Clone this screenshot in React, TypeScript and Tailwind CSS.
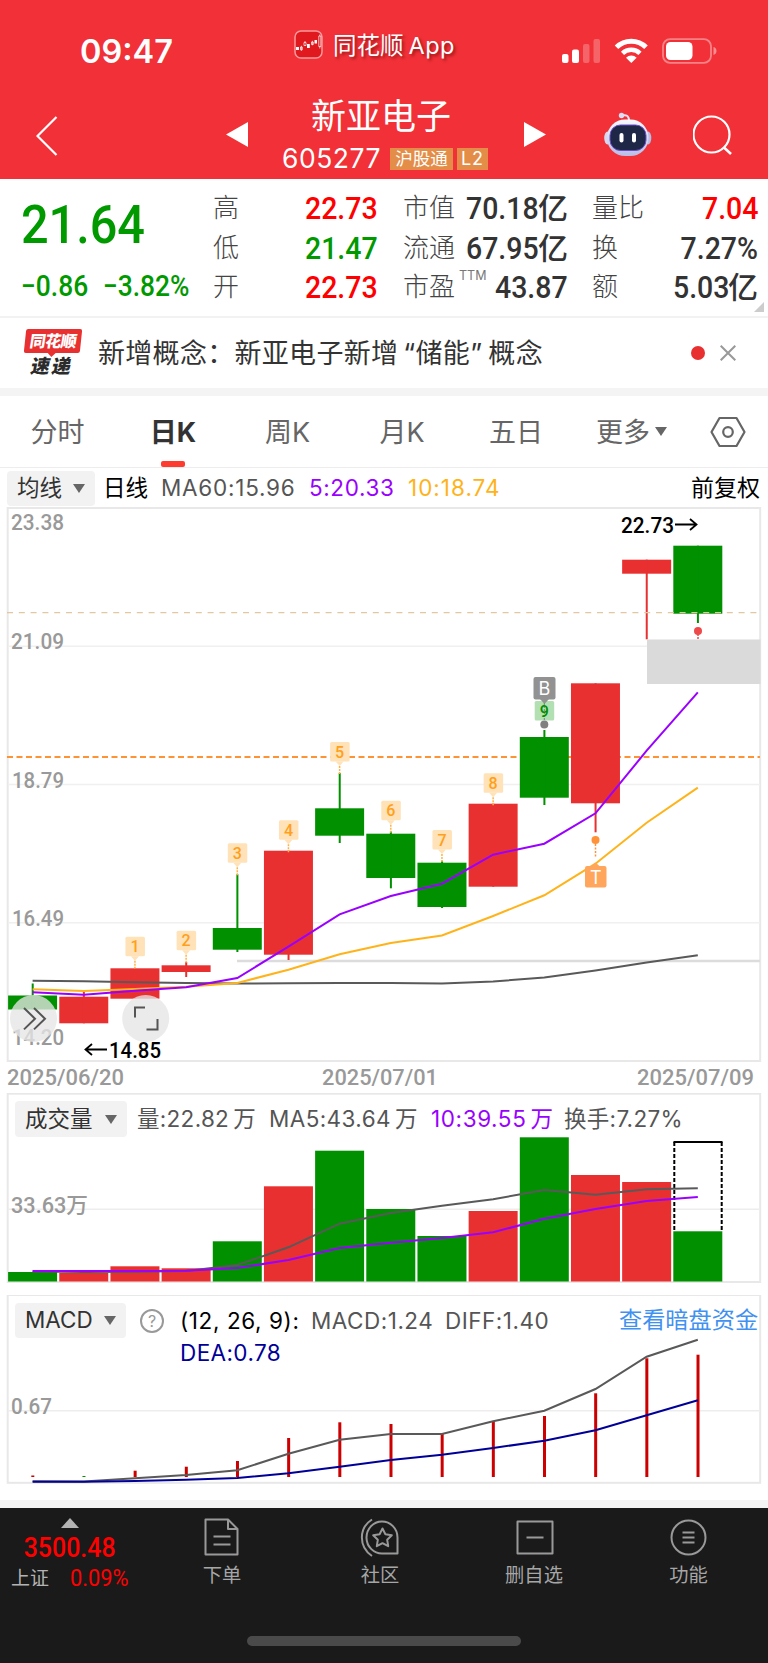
import clsx from 'clsx';
import type { ReactNode } from 'react';

const RED = '#e93030';
const GREEN = '#009000';
const PURPLE = '#9900ff';
const DIN = 'Roboto, "Noto Sans CJK SC", sans-serif';

// x centre of the n-th trading day, shared by all three charts
const cx = (i: number) => 32.6 + i * 51.17;

interface Candle {
    up: boolean;
    top: number;
    bottom: number;
    high: number;
    low: number;
}

const candles: Candle[] = [
    { up: false, top: 995.5, bottom: 1009.5, high: 983.5, low: 1009.5 },
    { up: true, top: 996.7, bottom: 1023.3, high: 992, low: 1023.3 },
    { up: true, top: 968.3, bottom: 998.7, high: 968.3, low: 998.7 },
    { up: true, top: 965.3, bottom: 972, high: 962, low: 977 },
    { up: false, top: 928, bottom: 949.7, high: 874.3, low: 952 },
    { up: true, top: 850.7, bottom: 954.7, high: 850.7, low: 960 },
    { up: false, top: 808.3, bottom: 835.7, high: 773, low: 843 },
    { up: false, top: 833.7, bottom: 878, high: 831.5, low: 888.3 },
    { up: false, top: 862.7, bottom: 907, high: 860.7, low: 908 },
    { up: true, top: 803.7, bottom: 886.7, high: 803.7, low: 886.7 },
    { up: false, top: 737, bottom: 797.7, high: 730, low: 805 },
    { up: true, top: 683.3, bottom: 803.3, high: 683.3, low: 832.3 },
    { up: true, top: 559.7, bottom: 573.7, high: 559.7, low: 639.3 },
    { up: false, top: 545.7, bottom: 613.7, high: 545.7, low: 623 },
];

const ma60 = [980.7, 981.3, 982.3, 983, 983.5, 983.3, 983, 983, 983.5, 981.5, 977.5, 970.5, 962.5, 955.3];
const ma5 = [992.3, 994.7, 990.7, 987.3, 978, 946.7, 914.3, 896, 883.7, 854.7, 843.7, 813.3, 750.7, 692.3];
const ma10 = [989.3, 991, 989, 986.7, 983, 969.7, 954.3, 943, 935.5, 916, 895.3, 863.7, 822.7, 787.7];

const volumes = [1272, 1273, 1266.3, 1268.3, 1241.3, 1186.3, 1150.7, 1209, 1236, 1211, 1137.3, 1175, 1182, 1231.3];
const volMa5 = [1271.5, 1272, 1271.7, 1271, 1265, 1247.3, 1223.7, 1213, 1205.7, 1199.3, 1190, 1194.7, 1189.3, 1188.3];
const volMa10 = [1271, 1271, 1271, 1270.7, 1268, 1260, 1248, 1242.7, 1238, 1232.3, 1218.7, 1209, 1201, 1197];

const macd = [1475.5, 1476, 1470.7, 1466.7, 1461, 1438, 1422.3, 1424, 1434, 1422, 1416, 1393.3, 1358.3, 1354.7];
const diff = [1481.3, 1481.5, 1478.3, 1475, 1470.3, 1453.7, 1439.7, 1434, 1434, 1421.3, 1410.7, 1389, 1356.7, 1339.7];
const dea = [1481.8, 1481.8, 1481, 1479.7, 1478, 1473.3, 1466.7, 1460, 1454.7, 1448, 1440.7, 1430.3, 1415.3, 1400.3];

// [day index, label, y of the tag's top edge]
const tags: [number, string, number][] = [
    [2, '1', 936.7],
    [3, '2', 930.7],
    [4, '3', 843.3],
    [5, '4', 820.3],
    [6, '5', 742],
    [7, '6', 800.7],
    [8, '7', 830],
    [9, '8', 773.3],
];

function Line({ ys, color, width = 2 }: { ys: number[]; color: string; width?: number }) {
    return (
        <polyline
            points={ys.map((y, i) => `${cx(i)},${y}`).join(' ')}
            fill="none"
            stroke={color}
            strokeWidth={width}
        />
    );
}

function AxisLabel({ x, y, w, children, color = '#999999' }: { x: number; y: number; w: number; children: ReactNode; color?: string }) {
    return (
        <text
            x={x}
            y={y}
            textLength={w}
            lengthAdjust="spacingAndGlyphs"
            fontFamily={DIN}
            fontSize="22"
            fontWeight="500"
            fill={color}
        >
            {children}
        </text>
    );
}

function Caret({ className }: { className?: string }) {
    return (
        <svg viewBox="0 0 12 9" className={clsx('h-[9px] w-3 shrink-0', className)}>
            <path d="M0 0h12L6 9z" fill="#666666" />
        </svg>
    );
}

function StatusBar() {
    return (
        <div className="flex h-[92px] text-white">
            <div className="mt-[35px] ml-[80px] w-[214px] text-[32.500px] leading-[34px] font-semibold">09:47</div>
            <svg viewBox="0 0 29 29" className="mt-[30px] h-[29px] w-[29px] shrink-0">
                <rect x="1" y="1" width="27" height="27" rx="6" fill="#e0191f" stroke="#f99a9c" strokeWidth="1.5" />
                <g fill="#fff">
                    <path d="M2 17h3v3H2zM13 14h2.800v4H13zM20.500 10h2.500v3.500h-2.500z" />
                </g>
                <g fill="none" stroke="#fff" strokeWidth="0.7">
                    <path d="M6.500 17h1.800v2.800H6.500zM10 12.500h2v3h-2zM17.500 12h1.800v2.500h-1.800zM24.800 6h2v10.500h-2zM7.400 15.800v5M11 11v1.500M18.400 10.800v4.500M25.800 4.500v1.500M25.800 16.500v2" />
                </g>
            </svg>
            <div className="mt-[31px] ml-[10px] w-[129px] text-[23.500px] leading-[29px] whitespace-nowrap [text-shadow:2px_2px_3px_rgba(80,0,0,.55)]">
                同花顺<span className="ml-[5px] tracking-[0.5px]">App</span>
            </div>
            <svg viewBox="0 0 156 27" className="mt-[38px] ml-[100px] h-[27px] w-[156px]">
                <g fill="#fff">
                    <rect x="0" y="16" width="6.500" height="9" rx="2" />
                    <rect x="10" y="11.500" width="7" height="13.500" rx="2" />
                    <rect x="21" y="6" width="6.500" height="19" rx="2" opacity=".25" />
                    <rect x="31.500" y="1" width="6.500" height="24" rx="2" opacity=".25" />
                </g>
                <g fill="none" stroke="#fff" strokeWidth="5">
                    <path d="M54.500 9.300a21 21 0 0 1 29.500 0" />
                    <path d="M60.500 15.300a12.500 12.500 0 0 1 17.500 0" strokeWidth="4.500" />
                </g>
                <path d="M69.300 25l-5.300-5.300a7.500 7.500 0 0 1 10.600 0z" fill="#fff" />
                <rect x="101" y="1.200" width="48" height="23.600" rx="7" fill="none" stroke="#fff" strokeOpacity=".4" strokeWidth="1.800" />
                <rect x="104" y="4" width="26.500" height="18" rx="4.500" fill="#fff" />
                <path d="M151.500 9c2 .6 3 2.200 3 4s-1 3.400-3 4z" fill="#fff" opacity=".45" />
            </svg>
        </div>
    );
}

function TitleBar() {
    return (
        <div className="flex h-[87px] text-white">
            <svg viewBox="0 0 22 40" className="mt-[24px] ml-[36px] h-10 w-[22px] shrink-0">
                <path d="M20.500 1L1.500 20l19 19" fill="none" stroke="#fff" strokeWidth="2.200" />
            </svg>
            <svg viewBox="0 0 22 25" className="mt-[30px] ml-[168px] h-[25px] w-[22px] shrink-0">
                <path d="M22 0v25L0 12.500z" fill="#fff" />
            </svg>
            <div className="ml-[22px] flex w-[230px] flex-col">
                <div className="mt-[5px] ml-[41px] text-[35px] leading-[38px] whitespace-nowrap">新亚电子</div>
                <div className="mt-[11px] flex h-[24px] w-full items-center pl-[12px]">
                    <span className="w-[108px] text-[26.500px] leading-6 tracking-[0.5px]">605277</span>
                    <span className="mt-[1px] h-[22px] w-[63px] bg-[#e48d48] text-center text-[17.500px] leading-[21px] whitespace-nowrap">
                        沪股通
                    </span>
                    <span className="mt-[1px] ml-1 h-[22px] w-[31px] bg-[#e48d48] text-center text-[18px] leading-[22px] tracking-[1px]">
                        L2
                    </span>
                </div>
            </div>
            <svg viewBox="0 0 22 25" className="mt-[30px] ml-[24px] h-[25px] w-[22px] shrink-0">
                <path d="M0 0v25l22-12.500z" fill="#fff" />
            </svg>
            <svg viewBox="0 0 48 45" className="mt-[20px] ml-[58px] h-[45px] w-12 shrink-0">
                <defs>
                    <linearGradient id="shell" x1="0" y1="0" x2="0" y2="1">
                        <stop offset="0" stopColor="#f8f8ff" />
                        <stop offset="1" stopColor="#b9bce6" />
                    </linearGradient>
                </defs>
                <path d="M18 3.500c4-1 7 0 7 5" fill="none" stroke="#e9e6f8" strokeWidth="2" />
                <circle cx="17.500" cy="3.500" r="2.700" fill="#dcdcf5" />
                <ellipse cx="3.500" cy="26" rx="3.300" ry="6.500" fill="#d5d8f0" />
                <ellipse cx="44" cy="26" rx="3.300" ry="6.500" fill="#b9bde6" />
                <rect x="3" y="7.500" width="41.500" height="36.500" rx="18" fill="url(#shell)" />
                <rect x="6" y="13" width="36" height="25.500" rx="10.500" fill="#1f2747" stroke="#6b4bc9" strokeWidth="1" />
                <rect x="15.500" y="21" width="4" height="9.500" rx="2" fill="#fff" />
                <rect x="28" y="21" width="4" height="9.500" rx="2" fill="#fff" />
            </svg>
            <svg viewBox="0 0 40 40" className="mt-[23px] ml-[41px] h-10 w-10 shrink-0">
                <circle cx="18.500" cy="19.500" r="18" fill="none" stroke="#fff" strokeWidth="2.200" />
                <path d="M31 32.500l7 6.500" stroke="#fff" strokeWidth="2.500" />
            </svg>
        </div>
    );
}

interface StatProps {
    label: string;
    value: string;
    unit?: string;
    sup?: string;
    className?: string;
}

function Stat({ label, value, unit, sup, className = 'text-[#333]' }: StatProps) {
    return (
        <div className="flex h-[39.7px] items-center whitespace-nowrap">
            <span className="text-[26px] leading-none font-light text-[#444]">{label}</span>
            {sup && <span className="mb-[22px] ml-1 text-[12.5px] leading-none text-[#777]">{sup}</span>}
            <span className={clsx('ml-auto flex h-full items-center', className)}>
                <span className="inline-block origin-right scale-x-[.89] font-[Roboto] text-[32px] leading-none font-medium">
                    {value}
                </span>
                {unit && <span className="-ml-px text-[30px] leading-none font-medium">{unit}</span>}
            </span>
        </div>
    );
}

function Quote() {
    return (
        <div className="relative flex h-[139px] border-b-2 border-[#f2f2f2] pt-[9px]">
            <div className="ml-[21px] w-[192px] font-[Roboto] text-[#009900]">
                <div className="mt-[7px] h-[60px] origin-left scale-x-[.9] text-[54px] leading-[60px] font-medium">21.64</div>
                <div className="mt-[15px] flex origin-left scale-x-[.91] text-[29px] leading-[32px] font-medium whitespace-nowrap">
                    <span className="w-[90px]">−0.86</span>
                    <span>−3.82%</span>
                </div>
            </div>
            <div className="w-[165px]">
                <Stat label="高" value="22.73" className="text-[#ff0000]" />
                <Stat label="低" value="21.47" className="text-[#009900]" />
                <Stat label="开" value="22.73" className="text-[#ff0000]" />
            </div>
            <div className="ml-[25px] w-[165px]">
                <Stat label="市值" value="70.18" unit="亿" />
                <Stat label="流通" value="67.95" unit="亿" />
                <Stat label="市盈" sup="TTM" value="43.87" />
            </div>
            <div className="ml-[24px] w-[166px]">
                <Stat label="量比" value="7.04" className="text-[#ff0000]" />
                <Stat label="换" value="7.27%" />
                <Stat label="额" value="5.03" unit="亿" />
            </div>
            <svg viewBox="0 0 10 10" className="absolute right-1 bottom-[4px] h-[10px] w-[10px]">
                <path d="M10 0v10H0z" fill="#cccccc" />
            </svg>
        </div>
    );
}

function NewsFlash() {
    return (
        <div className="flex h-[70px] items-center">
            <div className="ml-[25px] flex w-[73px] flex-col">
                <div className="relative flex h-[24px] w-[56px] -skew-x-6 items-center justify-center rounded-[2px] bg-[#e93030] text-[16px] leading-none font-black tracking-[-0.5px] text-white">
                    <span className="-skew-x-3">同花顺</span>
                    <svg viewBox="0 0 8 4" className="absolute top-6 left-[24px] h-1 w-2">
                        <path d="M0 0h8L4 4z" fill="#e93030" />
                    </svg>
                </div>
                <div className="ml-[6px] mt-[4px] h-5 -skew-x-12 text-[19px] leading-5 font-black tracking-[2px] text-[#2b2b2b]">速递</div>
            </div>
            <div className="w-[593px] text-[27px] leading-none tracking-[0.3px] whitespace-nowrap text-[#333]">
                新增概念：<span>新亚电子新增</span>
                <span className="ml-[5px] font-[Inter]">“</span>储能<span className="mr-[6px] font-[Inter]">”</span>概念
            </div>
            <div className="h-[14px] w-[14px] rounded-full bg-[#e93030]" />
            <svg viewBox="0 0 16 16" className="ml-[15px] h-4 w-4">
                <path d="M.7.7l14.600 14.600M15.300.7L.7 15.300" stroke="#999999" strokeWidth="2" />
            </svg>
        </div>
    );
}

const tabs = [
    { label: '分时', width: 'w-[115px]' },
    { label: '日K', width: 'w-[116px]', active: true },
    { label: '周K', width: 'w-[113px]' },
    { label: '月K', width: 'w-[116px]' },
    { label: '五日', width: 'w-[112px]' },
];

function PeriodTabs() {
    return (
        <div className="flex h-[72px] border-b border-[#ededed] text-[27px] leading-none text-[#666]">
            {tabs.map((tab) => (
                <div key={tab.label} className={clsx('flex flex-col items-center justify-between', tab.width)}>
                    <span className={clsx('pt-[23px]', tab.active && 'font-bold text-[#333]')}>{tab.label}</span>
                    {tab.active && <span className="h-[6px] w-[24px] rounded-[2px] bg-[#ff3b30]" />}
                </div>
            ))}
            <div className="flex w-[119px] justify-center pt-[23px]">
                更多
                <Caret className="mt-[8px] ml-[5px]" />
            </div>
            <svg viewBox="0 0 36 32" className="mt-[20px] ml-[19px] h-8 w-9">
                <path d="M9.500 2h17L34.500 16l-8 14h-17L1.500 16z" fill="none" stroke="#666666" strokeWidth="2.200" strokeLinejoin="round" />
                <circle cx="18" cy="16" r="4.800" fill="none" stroke="#666666" strokeWidth="2.200" />
            </svg>
        </div>
    );
}

function Picker({ label, className }: { label: string; className: string }) {
    return (
        <div className={clsx('flex shrink-0 items-center justify-between rounded-[4px] bg-[#f2f2f2] px-[10px] text-[#333]', className)}>
            {label}
            <Caret />
        </div>
    );
}

function CandleChart() {
    return (
        <svg viewBox="0 507 768 586" className="block h-[586px] w-[768px]">
            <rect x="7.700" y="508" width="752.500" height="553" fill="none" stroke="#e8e8e8" strokeWidth="2" />
            <path d="M8 646.200h752M8 784.500h752M8 922.800h752" stroke="#f0f0f0" strokeWidth="1.500" />
            <AxisLabel x={11} y={530} w={53}>23.38</AxisLabel>
            <AxisLabel x={11} y={649} w={53}>21.09</AxisLabel>
            <AxisLabel x={12} y={787.5} w={52}>18.79</AxisLabel>
            <AxisLabel x={12} y={926} w={52}>16.49</AxisLabel>
            <AxisLabel x={12} y={1045} w={52}>14.20</AxisLabel>

            <path d="M7 757h753" stroke="#ff9233" strokeWidth="2" strokeDasharray="6 3.500" />
            <path d="M237 961h523" stroke="#dcdcdc" strokeWidth="2.500" />
            {candles.map((c, i) => (
                <g key={i} fill={c.up ? RED : GREEN}>
                    <rect x={cx(i) - 24.5} y={c.top} width="49" height={c.bottom - c.top} />
                    <rect x={cx(i) - 0.9} y={c.high} width="2" height={c.low - c.high} />
                </g>
            ))}
            <path d="M7 612.700h753" stroke="#e3c7a1" strokeWidth="1.300" strokeDasharray="6 5.800" />
            <rect x="647" y="639.500" width="113.500" height="44.500" fill="#dadada" />
            <Line ys={ma60} color="#595959" />
            <Line ys={ma10} color="#ffb31a" />
            <Line ys={ma5} color={PURPLE} />

            {tags.map(([i, label, y]) => (
                <g key={label}>
                    <rect x={cx(i) - 9.5} y={y} width="19.500" height="19.500" rx="1.500" fill="#ffe2b8" />
                    <path d={`M${cx(i) - 4} ${y + 19.5}h8l-4 4.500z`} fill="#ffe2b8" />
                    <path d={`M${cx(i)} ${y + 24}v8`} stroke="#ffb347" strokeWidth="1.500" strokeDasharray="2 1" />
                    <text x={cx(i)} y={y + 15.5} textAnchor="middle" fontFamily={DIN} fontSize="16" fontWeight="500" fill="#ff9f1c">
                        {label}
                    </text>
                </g>
            ))}

            <rect x="534.700" y="701" width="19.500" height="19.500" rx="1.500" fill="#b3e0b3" />
            <path d="M540 699h9l-4.500 5z" fill="#929292" />
            <path d="M544.300 703v22" stroke="#808080" strokeWidth="1" strokeDasharray="2 1" />
            <text x="544.300" y="716.500" textAnchor="middle" fontFamily={DIN} fontSize="16" fontWeight="500" fill={GREEN}>
                9
            </text>
            <rect x="533.500" y="677" width="22" height="22.500" rx="2" fill="#929292" />
            <text x="544.300" y="695" textAnchor="middle" fontFamily="Inter" fontSize="18" fill="#fff">
                B
            </text>
            <circle cx="544.300" cy="724.500" r="4" fill="#808080" />

            <circle cx="595.500" cy="840" r="4" fill="#ff9138" />
            <path d="M595.500 844v14" stroke="#ff9138" strokeWidth="1.500" strokeDasharray="2 1.500" />
            <path d="M591 866.500h9l-4.500-4z" fill="#ffa65c" />
            <rect x="585" y="866" width="21.500" height="21.500" rx="2" fill="#ffa65c" />
            <text x="595.700" y="883.500" textAnchor="middle" fontFamily="Inter" fontSize="18" fill="#fff">
                T
            </text>

            <circle cx="698" cy="631" r="4" fill="#ef4a4a" />
            <path d="M698 634v6" stroke="#ef4a4a" strokeWidth="1.500" strokeDasharray="2 1" />

            <AxisLabel x={621} y={532.5} w={53} color="#000000">22.73</AxisLabel>
            <path d="M675 524.500h21M690 519l6.500 5.500-6.500 5.500" fill="none" stroke="#000" strokeWidth="1.800" />
            <AxisLabel x={109} y={1057.500} w={52} color="#000000">14.85</AxisLabel>
            <path d="M107 1049.500H86M92 1044l-6.500 5.500 6.500 5.500" fill="none" stroke="#000" strokeWidth="1.800" />

            <g fill="#e6e6e6" fillOpacity=".78">
                <circle cx="33.500" cy="1018.500" r="23.500" />
                <circle cx="145.700" cy="1018.500" r="23.500" />
            </g>
            <g fill="none" stroke="#555555" strokeWidth="2">
                <path d="M24 1008l11 10.700-11 10.700M34 1008l11 10.700-11 10.700" />
                <path d="M135 1017.500v-10h10M157.500 1019v10.500h-11" />
            </g>

            <AxisLabel x={7} y={1084.5} w={117}>2025/06/20</AxisLabel>
            <AxisLabel x={322} y={1084.5} w={116}>2025/07/01</AxisLabel>
            <AxisLabel x={637} y={1084.5} w={117}>2025/07/09</AxisLabel>
        </svg>
    );
}

function VolumePanel() {
    return (
        <div className="relative h-[202px]">
            <svg viewBox="0 1093 768 202" className="absolute inset-0 h-full w-full">
                <rect x="7.700" y="1093.700" width="752.500" height="188.300" fill="none" stroke="#e8e8e8" strokeWidth="2" />
                <path d="M8 1209.300h752" stroke="#ededed" strokeWidth="1.500" />
                {volumes.map((y, i) => (
                    <rect key={i} x={cx(i) - 24.5} y={y} width="49" height={1281.5 - y} fill={candles[i].up ? RED : GREEN} />
                ))}
                <path d="M673.500 1142h49" stroke="#000" strokeWidth="2" />
                <path d="M674.300 1142v89M721.700 1142v89" stroke="#000" strokeWidth="2" strokeDasharray="4 2" />
                <Line ys={volMa5} color="#595959" />
                <Line ys={volMa10} color={PURPLE} />
                <AxisLabel x={11} y={1212.5} w={77}>33.63万</AxisLabel>
            </svg>
            <div className="relative flex items-center pt-[8px] text-[22.500px] leading-none whitespace-nowrap text-[#555]">
                <Picker label="成交量" className="ml-[15px] h-9 w-[112px]" />
                <span className="ml-[10px] w-[132px] pt-px tracking-[0.3px]">
                    量:22.82<span className="ml-[4px]">万</span>
                </span>
                <span className="w-[162px] pt-px tracking-[0.4px]">
                    MA5:43.64<span className="ml-[4px]">万</span>
                </span>
                <span className="w-[133px] pt-px tracking-[0.6px] text-[#9900ff]">
                    10:39.55<span className="ml-[4px]">万</span>
                </span>
                <span className="pt-px tracking-[0.3px]">换手:7.27%</span>
            </div>
        </div>
    );
}

function MacdPanel() {
    return (
        <div className="relative h-[205px]">
            <svg viewBox="0 1295 768 205" className="absolute inset-0 h-full w-full">
                <rect x="7.700" y="1295" width="752.500" height="187.800" fill="none" stroke="#e8e8e8" strokeWidth="2" />
                <path d="M8 1410.700h752" stroke="#ededed" strokeWidth="1.500" />
                {macd.map((y, i) => (
                    <rect key={i} x={cx(i) - 1.3} y={y} width="3" height={1477 - y} fill={i === 1 ? GREEN : '#cc0000'} />
                ))}
                <Line ys={diff} color="#595959" />
                <Line ys={dea} color="#000099" />
                <AxisLabel x={11} y={1414} w={41}>0.67</AxisLabel>
            </svg>
            <div className="relative flex items-center pt-[8px] text-[22.500px] leading-none whitespace-nowrap text-[#555]">
                <Picker label="MACD" className="ml-[15px] h-[35px] w-[111px]" />
                <span className="ml-[14px] flex h-6 w-6 items-center justify-center rounded-full border-2 border-[#999] text-[16px] text-[#999]">
                    ?
                </span>
                <span className="ml-[16px] w-[131px] pt-px tracking-[0.6px] text-black">(12, 26, 9):</span>
                <span className="w-[134px] pt-px tracking-[0.5px]">MACD:1.24</span>
                <span className="w-[174px] pt-px tracking-[0.5px]">DIFF:1.40</span>
                <span className="pt-px text-[23.200px] text-[#4191f0]">查看暗盘资金</span>
            </div>
            <div className="relative mt-[4px] ml-[180px] text-[22.500px] leading-none tracking-[0.4px] text-[#000099]">DEA:0.78</div>
        </div>
    );
}

const navItems = [
    {
        label: '下单',
        width: 'w-[166px]',
        icon: (
            <>
                <path d="M3.500 2.500H26l9.500 9.500v25.500h-32zM26 2.500V12h9.500" />
                <path d="M11.500 19.500h17M11.500 27.500h17" />
            </>
        ),
    },
    {
        label: '社区',
        width: 'w-[150px]',
        icon: (
            <>
                <path d="M37.500 36.500H22.500a15.500 16 0 1 1 15-16z" />
                <path d="M12 2.500C-1.500 11-1.500 30 12 39" />
                <path d="M22.500 11.500l2.900 5.800 6.400 1-4.600 4.500 1 6.400-5.700-3-5.700 3 1-6.400-4.600-4.500 6.400-1z" />
            </>
        ),
    },
    {
        label: '删自选',
        width: 'w-[158px]',
        icon: <path d="M3.500 4.500h35v32h-35zM12.500 20.500h17" />,
    },
    {
        label: '功能',
        width: 'w-[151px]',
        icon: (
            <>
                <circle cx="20.500" cy="20.500" r="17" />
                <path d="M14.500 15.500h12M14.500 20.500h12M14.500 25.500h12" />
            </>
        ),
    },
];

function BottomNav() {
    return (
        <div className="flex h-[155px] flex-col items-center bg-[#1a1a1a]">
            <div className="flex h-[128px] w-full">
                <div className="flex w-[139px] flex-col items-center">
                    <svg viewBox="0 0 18 10" className="mt-[10px] h-[10px] w-[18px]">
                        <path d="M9 0l9 10H0z" fill="#b3b3b3" />
                    </svg>
                    <div className="mt-[4px] scale-x-[.89] font-[Roboto] text-[28px] leading-[32px] font-medium text-[#ff0000]">3500.48</div>
                    <div className="mt-[2px] flex h-[24px] w-full items-center whitespace-nowrap">
                        <span className="ml-[11px] text-[19px] leading-none text-[#b3b3b3]">上证</span>
                        <span className="ml-[21px] origin-left scale-x-[.91] font-[Roboto] text-[24px] leading-none text-[#ff0000]">
                            0.09%
                        </span>
                    </div>
                </div>
                {navItems.map((item) => (
                    <div key={item.label} className={clsx('flex flex-col items-center text-[#a6a6a6]', item.width)}>
                        <svg
                            viewBox="0 0 41 41"
                            className="mt-[9px] h-[41px] w-[41px]"
                            fill="none"
                            stroke="#999999"
                            strokeWidth="2"
                            strokeLinejoin="round"
                        >
                            {item.icon}
                        </svg>
                        <span className="mt-[8px] text-[19.300px] leading-none">{item.label}</span>
                    </div>
                ))}
            </div>
            <div className="h-[10px] w-[274px] rounded-full bg-[#4a4a4a]" />
        </div>
    );
}

export default function App() {
    return (
        <div className="flex h-[1663px] w-[768px] flex-col overflow-hidden bg-white font-[Inter,'Noto_Sans_CJK_SC',sans-serif]">
            <header className="h-[179px] shrink-0 bg-[#f23037]">
                <StatusBar />
                <TitleBar />
            </header>
            <Quote />
            <NewsFlash />
            <div className="h-2 bg-[#f4f4f4]" />
            <PeriodTabs />
            <div className="flex h-[39px] items-center pt-px text-[22.500px] leading-none whitespace-nowrap text-black">
                <Picker label="均线" className="ml-[7px] h-[35px] w-[88px]" />
                <span className="ml-[8px] w-[58px]">日线</span>
                <span className="w-[148px] tracking-[0.75px] text-[#555]">MA60:15.96</span>
                <span className="w-[99px] tracking-[0.6px] text-[#9900ff]">5:20.33</span>
                <span className="tracking-[1px] text-[#ffb31a]">10:18.74</span>
                <span className="mr-[8px] ml-auto text-[23px]">前复权</span>
            </div>
            <CandleChart />
            <VolumePanel />
            <MacdPanel />
            <div className="h-2 bg-[#f4f4f4]" />
            <BottomNav />
        </div>
    );
}
